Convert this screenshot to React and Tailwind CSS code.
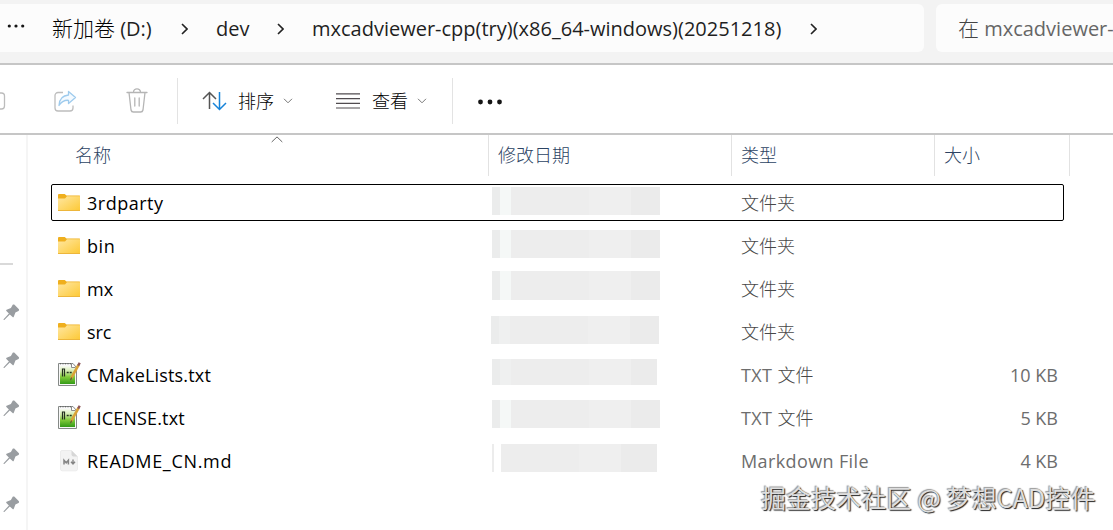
function Chevron({ className, d = "M1 1l5 5-5 5", w = 7, h = 12, stroke = "#222", sw = 1.6 }) {
  return (
    <svg className={className} width={w} height={h} viewBox={`0 0 ${w} ${h}`} fill="none" stroke={stroke} strokeWidth={sw}>
      <path d={d} />
    </svg>
  );
}

function Down({ className }) {
  return <Chevron className={className} w={10} h={6} d="M1 .8l4 4 4-4" stroke="#777" sw={1} />;
}

function Dots({ className, w, gap, r }) {
  const c = w / 2;
  return (
    <svg className={className} width={w} height="6" viewBox={`0 0 ${w} 6`} fill="#151515">
      <circle cx={c - gap} cy="3" r={r} />
      <circle cx={c} cy="3" r={r} />
      <circle cx={c + gap} cy="3" r={r} />
    </svg>
  );
}

function AddressBar() {
  return (
    <header className="flex h-[65px] shrink-0 gap-3 border-b-2 border-[#c6c6c6] bg-[#f3f3f3] pt-1 text-[20px] text-[#1f1f1f]">
      <div className="flex h-12 w-[924px] shrink-0 items-center rounded-r-md bg-[#fcfcfc] whitespace-nowrap">
        <Dots className="mb-1 ml-[6px] shrink-0" w={20} gap={6.7} r={1.6} />
        <span className="ml-[26px] w-[127px] pt-px"><span className="text-[21px] font-light text-black">新加卷</span> (D:)</span>
        <Chevron className="mt-[2px] ml-[2px]" />
        <span className="ml-[28px] w-[60px] pt-[2px]">dev</span>
        <Chevron className="mt-[2px] ml-[1px]" />
        <span className="ml-[28px] w-[496px] pt-[2px]">mxcadviewer-cpp(try)(x86_64-windows)(20251218)</span>
        <Chevron className="mt-[2px] ml-[2px]" />
      </div>
      <div className="flex h-12 flex-1 items-center overflow-hidden rounded-l-md bg-[#fcfcfc] pl-[22px] whitespace-nowrap text-[#666]">
        <span className="pt-px"><span className="text-[21px] font-light text-[#444]">在</span> mxcadviewer-</span>
      </div>
    </header>
  );
}

function Toolbar() {
  return (
    <nav className="flex h-[70px] shrink-0 items-center border-b-2 border-[#c6c6c6] pt-[4px] text-[18px] whitespace-nowrap text-black">
      <svg className="shrink-0" width="6" height="18" viewBox="0 0 6 18" fill="none" stroke="#bcbcbc" strokeWidth="1.3">
        <path d="M0 1h1.500a3 3 0 0 1 3 3v10a3 3 0 0 1-3 3H0" />
      </svg>
      <svg className="ml-[48px] shrink-0" width="23" height="23" viewBox="0 0 23 23" fill="none" strokeWidth="1.3" strokeLinejoin="round">
        <path d="M9 2.500H4a3 3 0 0 0-3 3V18a3 3 0 0 0 3 3h12a3 3 0 0 0 3-3V15.500" stroke="#bdbdbd" />
        <path d="M14.500 1.500l7 6-7 6V10.300C10 10 7.500 11.500 5 15.500c.3-6 3.500-10 9.500-10.500z" stroke="#9ecbed" fill="#f4faff" />
      </svg>
      <svg className="ml-[49px] shrink-0" width="22" height="26" viewBox="0 0 22 26" fill="none" stroke="#b5b5b5" strokeWidth="1.3" strokeLinecap="round">
        <path d="M1 4.500h20M7.500 4.300a3.500 3.500 0 0 1 7 0M3 4.500l2 17.500a2.500 2.500 0 0 0 2.500 2h7a2.500 2.500 0 0 0 2.500-2L19 4.500M8.800 10v8M13.200 10v8" />
      </svg>
      <div className="ml-[29px] h-[46px] w-px bg-[#e3e3e3]" />
      <svg className="ml-[24px] shrink-0" width="25" height="20" viewBox="0 0 25 20" fill="none" strokeWidth="1.5">
        <path d="M7.500 18V1.500M1 8l6.500-6.500L14 8" stroke="#555" />
        <path d="M17.500 1v17.500M11 12l6.500 6.500L24 12" stroke="#1683d8" />
      </svg>
      <span className="ml-[11px] font-light">排序</span>
      <Down className="ml-[9px]" />
      <svg className="ml-[43px] shrink-0" width="24" height="16" viewBox="0 0 24 16" stroke="#514c50" strokeWidth="1.2">
        <path d="M0 .9h24M0 5.600h24M0 10.300h24M0 15h24" />
      </svg>
      <span className="ml-[12px] font-light">查看</span>
      <Down className="ml-[9px]" />
      <div className="ml-[25px] h-[46px] w-px bg-[#e3e3e3]" />
      <Dots className="mt-px ml-[23px]" w={28} gap={9.500} r={2.400} />
    </nav>
  );
}

function Pin() {
  return (
    <svg width="17" height="17" viewBox="0 0 17 17" fill="#999da1">
      <path d="M9.700.8c.5-.5 1.300-.5 1.800 0l4.200 4.200c.6.600.5 1.500-.2 1.900l-3.100 1.600-1.600 4.300c-.2.600-.8.700-1.200.3L6.800 10.500 1.300 16H.6v-.8l5.300-5.600-2.500-2.700c-.4-.4-.3-1 .2-1.200l4.300-1.700z" />
    </svg>
  );
}

function Sidebar() {
  return (
    <aside className="flex w-[28px] shrink-0 flex-col border-r-2 border-[#f5f5f5] pt-[128px]">
      <div className="h-[2px] w-[13px] bg-[#d9d9d9]" />
      <div className="mt-[39px] flex flex-col gap-[31px] pl-[3px]">
        <Pin /><Pin /><Pin /><Pin /><Pin />
      </div>
    </aside>
  );
}

function FolderIcon() {
  return (
    <svg width="23" height="18" viewBox="0 0 23 18">
      <defs>
        <linearGradient id="folder" x1="0" y1="0" x2="1" y2="1">
          <stop offset="0" stopColor="#ffe7a2" />
          <stop offset="1" stopColor="#fdc936" />
        </linearGradient>
      </defs>
      <path d="M0 1Q0 0 1 0h5.700L8.500 1.500H21.500q.5 0 .5.500V8H0z" fill="#efaf1e" />
      <path d="M0 4.500h7l2-2.200h13V16.500H0z" fill="url(#folder)" />
      <path d="M0 16.500h22" stroke="#edb63b" />
    </svg>
  );
}

function TextIcon() {
  return (
    <svg width="23" height="25" viewBox="0 0 23 25">
      <defs>
        <linearGradient id="sheet" x1="0" y1="0" x2="0" y2="1">
          <stop offset="0" stopColor="#f8fbf3" />
          <stop offset=".3" stopColor="#d3ecae" />
          <stop offset=".6" stopColor="#82cb3b" />
          <stop offset="1" stopColor="#339a17" />
        </linearGradient>
      </defs>
      <path d="M.5 1.500h14.500l3.500 4V23.500H.5z" fill="#f8f8f8" stroke="#858987" />
      <path d="M2 4h15v18H2z" fill="url(#sheet)" />
      <path d="M2 1.800h12" stroke="#555" strokeDasharray="1 1.500" />
      <path d="M13.500 1.500V5.500h4" fill="#fff" stroke="#8b8b8b" />
      <path d="M4.500 14.500V7h2v7.500" fill="none" stroke="#24301f" strokeWidth="1.200" />
      <path d="M8.700 10.500h2M11.700 10.500h2" stroke="#24301f" strokeWidth="1.700" />
      <path d="M20.500 3l-7.300 13.200" stroke="#d9a338" strokeWidth="2.600" />
      <path d="M21.700.8l-1.500 2.800" stroke="#8d5659" strokeWidth="2.400" />
      <path d="M13.700 15.500l-1.200 2.700" stroke="#6b5733" strokeWidth="1.200" />
    </svg>
  );
}

function MarkdownIcon() {
  return (
    <svg width="23" height="24" viewBox="0 0 23 24">
      <path d="M2.500 3q0-1.500 1.500-1.500h9.500l6 6V20q0 1.800-1.500 1.800H4Q2.500 21.800 2.500 20z" fill="#f3f3f3" stroke="#e8e8e8" strokeWidth=".8" />
      <path d="M13.500 1.500v4q0 2 2 2h4z" fill="#d7d7d7" />
      <path d="M6 15.500v-4.300l2.200 2.600 2.200-2.600v4.300" fill="none" stroke="#858585" strokeWidth="1.500" />
      <path d="M15 10.500v4M13 12.800l2 2.200 2-2.200" fill="none" stroke="#858585" strokeWidth="1.400" />
    </svg>
  );
}

const icons = { folder: FolderIcon, text: TextIcon, markdown: MarkdownIcon };

const files = [
  { name: "3rdparty", track: "tracking-[0.5px]", icon: "folder", cjk: "文件夹", mask: "mt-[2px] ml-0 h-[28px] w-[168px]", seam: true },
  { name: "bin", track: "tracking-[0.6px]", icon: "folder", cjk: "文件夹", mask: "mt-[2px] ml-0 h-[28px] w-[168px]", seam: true },
  { name: "mx", track: "tracking-normal", icon: "folder", cjk: "文件夹", mask: "mt-0 ml-0 h-[29px] w-[168px]", seam: true },
  { name: "src", track: "tracking-[-0.1px]", icon: "folder", cjk: "文件夹", mask: "mt-[2px] ml-[-1px] h-[28px] w-[168px]" },
  { name: "CMakeLists.txt", track: "tracking-[0.17px]", icon: "text", latin: "TXT ", cjk: "文件", size: "10 KB", mask: "mt-[2px] ml-0 h-[26px] w-[165px]" },
  { name: "LICENSE.txt", track: "tracking-[0.15px]", icon: "text", latin: "TXT ", cjk: "文件", size: "5 KB", mask: "mt-0 ml-0 h-[28px] w-[168px]", seam: true },
  { name: "README_CN.md", track: "tracking-[0.68px]", icon: "markdown", latin: "Markdown File", size: "4 KB", mask: "mt-[1px] ml-0 h-[28px] w-[165px]", split: true },
];

function DateMask({ file }) {
  return (
    <div className={`flex ${file.mask}`}>
      {file.split ? (
        <>
          <div className="w-[2px] bg-[#ececec]" />
          <div className="w-[7px]" />
        </>
      ) : (
        <>
          <div className="w-[8px] bg-[#ebecec]" />
          <div className={`w-[11px] ${file.seam ? "bg-[#f5f8f7]" : "bg-[#eff0f0]"}`} />
        </>
      )}
      <div className="w-[78px] bg-[#ededed]" />
      <div className="w-[42px] bg-[#efefef]" />
      <div className="flex-1 bg-[#ebebeb]" />
    </div>
  );
}

function FileRow({ file, selected }) {
  const Icon = icons[file.icon];
  return (
    <div className={`flex h-[37px] w-[1013px] rounded-[2px] border ${selected ? "border-black" : "border-transparent"}`}>
      <div className="flex w-[440px] items-center pl-[6px]">
        <Icon />
        <span className={`ml-[6px] pt-[2px] text-black ${file.track}`}>{file.name}</span>
      </div>
      <div className="w-[249px]"><DateMask file={file} /></div>
      <div className="flex flex-1 items-center pt-[2px] whitespace-pre">
        <span className="tracking-[0.38px]">{file.latin}</span>
        <span className="font-light text-[#484848]">{file.cjk}</span>
      </div>
      <div className="flex w-[90px] items-center justify-end pt-[2px] pr-[5px]">{file.size}</div>
    </div>
  );
}

function FileList() {
  return (
    <main className="flex flex-1 flex-col text-[18px] whitespace-nowrap text-[#6d6d6d]">
      <div className="relative flex h-[41px] font-light text-[#2c4363]">
        <svg className="absolute top-px left-[243px]" width="12" height="7" viewBox="0 0 12 7" fill="none" stroke="#666">
          <path d="M.7 6L6 .9 11.300 6" />
        </svg>
        <div className="flex w-[461px] items-center border-r border-[#e2e2e2] pb-px pl-[47px]">名称</div>
        <div className="flex w-[243px] items-center border-r border-[#e2e2e2] pb-px pl-[9px]">修改日期</div>
        <div className="flex w-[203px] items-center border-r border-[#e2e2e2] pb-px pl-[9px]">类型</div>
        <div className="flex w-[135px] items-center border-r border-[#e2e2e2] pb-px pl-[9px]">大小</div>
      </div>
      <div className="mt-[8px] ml-[23px] flex flex-col gap-[6px]">
        {files.map((file, i) => <FileRow key={file.name} file={file} selected={i === 0} />)}
      </div>
    </main>
  );
}

export default function App() {
  return (
    <div className="relative flex h-[530px] w-[1113px] flex-col overflow-hidden bg-white font-['Open_Sans','Noto_Sans_CJK_SC',sans-serif]">
      <AddressBar />
      <Toolbar />
      <div className="flex flex-1">
        <Sidebar />
        <FileList />
      </div>
      <div className="absolute top-[479px] left-[761px] font-['Noto_Sans_CJK_SC',sans-serif] text-[25px] tracking-[0.08px] whitespace-nowrap text-[#dedede] [text-shadow:1px_1px_1px_#222,-1px_-1px_1px_#999]">
        掘金技术社区 @ 梦想CAD控件
      </div>
    </div>
  );
}
